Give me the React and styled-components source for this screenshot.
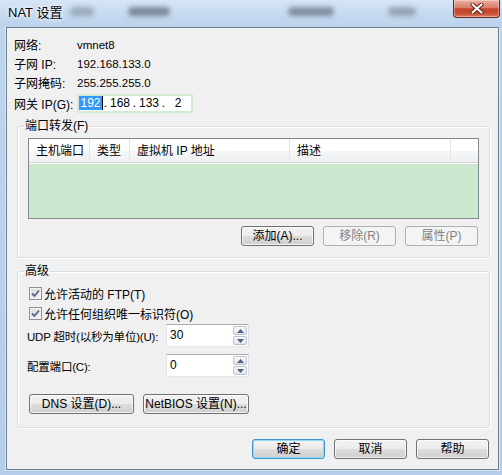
import React from 'react';
import styled, { createGlobalStyle } from 'styled-components';

const GlobalStyle = createGlobalStyle`
  html, body {
    margin: 0;
    padding: 0;
    background: #b9d1ea;
  }
  body {
    font-family: "Liberation Sans", "Noto Sans CJK SC", sans-serif;
    font-size: 12px;
    color: #000;
    overflow: hidden;
  }
`;

const Window = styled.div`
  width: 502px;
  height: 475px;
  display: flex;
  flex-direction: column;
  background: linear-gradient(to bottom, #c8dcf1 0px, #bdd4ec 40px, #b4cde8 100%);
`;

const TitleBar = styled.div`
  position: relative;
  height: 27px;
  flex-shrink: 0;
  display: flex;
  align-items: flex-start;
  background: linear-gradient(to bottom, #d6e6f6, #c3d8ef 60%, #bcd3ec);
`;

const Blur = styled.span`
  position: absolute;
  top: 7px;
  left: ${p => p.$left}px;
  width: ${p => p.$width}px;
  height: 9px;
  border-radius: 5px;
  background: rgba(70, 80, 95, ${p => p.$alpha});
  filter: blur(2.5px);
`;

const Title = styled.div`
  position: relative;
  z-index: 1;
  padding: 5px 0 0 8px;
  font-size: 13px;
  line-height: 15px;
  text-shadow: 0 0 5px #fff, 0 0 3px #fff;
`;

const CloseButton = styled.div`
  position: relative;
  z-index: 1;
  margin-left: auto;
  margin-right: 2px;
  width: 47px;
  height: 18px;
  box-sizing: border-box;
  border: 1px solid #6e2419;
  border-top: none;
  border-radius: 0 0 4px 4px;
  background: linear-gradient(to bottom, #eab0a2 0%, #d97d6a 45%, #c5432d 52%, #c94f33 80%, #dc8166 100%);
  box-shadow: inset 0 0 0 1px rgba(255, 255, 255, 0.35);
  display: flex;
  align-items: center;
  justify-content: center;
`;

const Client = styled.div`
  flex: 1;
  margin: 0 3px 5px 6px;
  border: 1px solid #6f7f92;
  background: #f0f0f0;
  display: flex;
  flex-direction: column;
  box-shadow: 0 0 0 1px rgba(255, 255, 255, 0.45);
`;

const InfoList = styled.div`
  display: flex;
  flex-direction: column;
  padding: 7px 0 0 7px;
`;

const InfoRow = styled.div`
  display: grid;
  grid-template-columns: 63px auto;
  align-items: center;
  height: 19px;
  margin-top: ${p => p.$mt || 0}px;
`;

const InfoValue = styled.span`
  font-size: 11.5px;
`;

const IpBox = styled.div`
  display: flex;
  align-items: center;
  width: 116px;
  height: 19px;
  box-sizing: border-box;
  border: 2px solid #d3ebd3;
  background: #fff;
`;

const Octet = styled.span`
  width: 24px;
  text-align: center;
  line-height: 15px;
`;

const Dot = styled.span`
  width: 5px;
  text-align: center;
  line-height: 15px;
`;

const Selected = styled.span`
  background: #3399ff;
  color: #fff;
  padding: 0 1px;
  border-right: 1px solid #000;
`;

const Group = styled.fieldset`
  margin: ${p => p.$mt}px 8px 0 10px;
  padding: 0;
  min-width: 0;
  border: 1px solid #d5dfe5;
  border-radius: 3px;
  box-shadow: inset 1px 1px 0 #fff, 1px 1px 0 #fff;
`;

const Legend = styled.legend`
  margin-left: 6px;
  padding: 0 1px;
  font-size: 12px;
  line-height: 14px;
`;

const GroupBody = styled.div`
  padding: ${p => p.$pad};
  display: flex;
  flex-direction: column;
`;

const Table = styled.div`
  height: 81px;
  box-sizing: border-box;
  border: 1px solid #828790;
  background: #cce8cf;
`;

const HeaderRow = styled.div`
  display: flex;
  height: 23px;
  border-bottom: 1px solid #d5d5d5;
  box-shadow: 0 1px 0 #fff;
  background: linear-gradient(to bottom, #ffffff 0%, #ffffff 50%, #f5f6f7 52%, #eff1f3 100%);
`;

const HeaderCell = styled.div`
  box-sizing: border-box;
  width: ${p => (p.$w ? `${p.$w}px` : 'auto')};
  flex: ${p => (p.$w ? 'none' : '1')};
  padding-left: 7px;
  line-height: 24px;
  border-right: ${p => (p.$last ? 'none' : '1px solid #e3e5e8')};
  white-space: nowrap;
`;

const ButtonRow = styled.div`
  display: flex;
  justify-content: ${p => (p.$start ? 'flex-start' : 'flex-end')};
  gap: 9px;
  margin: ${p => p.$margin};
`;

const Button = styled.button`
  box-sizing: border-box;
  width: ${p => p.$w || 73}px;
  height: 20px;
  padding: 0;
  font: inherit;
  font-size: 12px;
  line-height: 18px;
  color: #000;
  white-space: nowrap;
  border: 1px solid ${p => (p.$default ? '#3b93cf' : '#707070')};
  border-radius: 3px;
  background: linear-gradient(to bottom, #f3f3f3 0%, #ebebeb 48%, #dddddd 52%, #cfcfcf 100%);
  box-shadow: inset 0 0 0 1px ${p => (p.$default ? '#8fdcfa' : 'rgba(255, 255, 255, 0.75)')};

  &:disabled {
    border-color: #adb2b5;
    background: #f4f4f4;
    color: #838383;
    box-shadow: none;
  }
`;

const CheckRow = styled.label`
  display: flex;
  align-items: center;
  gap: 2px;
  height: 20px;
  margin-left: 2px;
`;

const CheckBox = styled.span`
  width: 13px;
  height: 13px;
  box-sizing: border-box;
  border: 1px solid #8f8f8f;
  background: linear-gradient(135deg, #d8d8d8, #f7f7f7);
  box-shadow: inset 0 0 0 1px #f4f4f4;
  display: flex;
  align-items: center;
  justify-content: center;
`;

const FieldRow = styled.div`
  display: grid;
  grid-template-columns: 139px 83px;
  align-items: center;
  height: 23px;
  margin-top: ${p => p.$mt}px;
`;

const FieldLabel = styled.span`
  white-space: nowrap;
  font-size: 11.5px;
  letter-spacing: -0.2px;
`;

const SpinBox = styled.div`
  height: 23px;
  box-sizing: border-box;
  border: 1px solid #abadb3;
  border-left-color: #e2e3ea;
  border-right-color: #dbdfe6;
  border-bottom-color: #e3e9ef;
  background: #fff;
  display: flex;
`;

const SpinText = styled.span`
  flex: 1;
  padding-left: 3px;
  line-height: 21px;
`;

const SpinButtons = styled.div`
  width: 14px;
  display: flex;
  flex-direction: column;
  gap: 1px;
  padding: 1px 1px 1px 0;
`;

const SpinButton = styled.span`
  flex: 1;
  border: 1px solid #bcc3cc;
  border-radius: 2px;
  background: linear-gradient(to bottom, #f7f8f9, #e1e5ea);
  display: flex;
  align-items: center;
  justify-content: center;
`;

const Footer = styled(ButtonRow)``;

function Check() {
  return (
    <CheckBox>
      <svg width="9" height="9" viewBox="0 0 9 9">
        <path d="M1 4.5 L3.5 7 L8 1.5" fill="none" stroke="#55688c" strokeWidth="1.8" />
      </svg>
    </CheckBox>
  );
}

function Spinner({ value }) {
  return (
    <SpinBox>
      <SpinText>{value}</SpinText>
      <SpinButtons>
        <SpinButton>
          <svg width="7" height="4" viewBox="0 0 7 4"><path d="M0 4 L3.5 0 L7 4 Z" fill="#4d6185" /></svg>
        </SpinButton>
        <SpinButton>
          <svg width="7" height="4" viewBox="0 0 7 4"><path d="M0 0 L7 0 L3.5 4 Z" fill="#4d6185" /></svg>
        </SpinButton>
      </SpinButtons>
    </SpinBox>
  );
}

export default function App() {
  return (
    <Window>
      <GlobalStyle />
      <TitleBar>
        <Blur $left={70} $width={24} $alpha={0.35} />
        <Blur $left={128} $width={42} $alpha={0.6} />
        <Blur $left={288} $width={46} $alpha={0.55} />
        <Blur $left={388} $width={28} $alpha={0.4} />
        <Title>NAT 设置</Title>
        <CloseButton>
          <svg width="14" height="11" viewBox="0 0 14 11">
            <path d="M2.5 1.5 L11.5 9.5 M11.5 1.5 L2.5 9.5" stroke="#5a1e14" strokeWidth="4" strokeLinecap="round" />
            <path d="M2.5 1.5 L11.5 9.5 M11.5 1.5 L2.5 9.5" stroke="#fff" strokeWidth="2.2" strokeLinecap="round" />
          </svg>
        </CloseButton>
      </TitleBar>
      <Client>
        <InfoList>
          <InfoRow><span>网络:</span><InfoValue>vmnet8</InfoValue></InfoRow>
          <InfoRow><span>子网 IP:</span><InfoValue>192.168.133.0</InfoValue></InfoRow>
          <InfoRow><span>子网掩码:</span><InfoValue>255.255.255.0</InfoValue></InfoRow>
          <InfoRow $mt={2}>
            <span>网关 IP(G):</span>
            <IpBox>
              <Octet><Selected>192</Selected></Octet>
              <Dot>.</Dot>
              <Octet>168</Octet>
              <Dot>.</Dot>
              <Octet>133</Octet>
              <Dot>.</Dot>
              <Octet>2</Octet>
            </IpBox>
          </InfoRow>
        </InfoList>

        <Group $mt={6}>
          <Legend>端口转发(F)</Legend>
          <GroupBody $pad="5px 10px 11px 10px">
            <Table>
              <HeaderRow>
                <HeaderCell $w={61}>主机端口</HeaderCell>
                <HeaderCell $w={40}>类型</HeaderCell>
                <HeaderCell $w={160}>虚拟机 IP 地址</HeaderCell>
                <HeaderCell $w={161}>描述</HeaderCell>
                <HeaderCell $last />
              </HeaderRow>
            </Table>
            <ButtonRow $margin="7px 1px 0 0">
              <Button>添加(A)...</Button>
              <Button disabled>移除(R)</Button>
              <Button disabled>属性(P)</Button>
            </ButtonRow>
          </GroupBody>
        </Group>

        <Group $mt={6}>
          <Legend>高级</Legend>
          <GroupBody $pad="5px 0 13px 9px">
            <CheckRow><Check />允许活动的 FTP(T)</CheckRow>
            <CheckRow><Check />允许任何组织唯一标识符(O)</CheckRow>
            <FieldRow $mt={1}>
              <FieldLabel>UDP 超时(以秒为单位)(U):</FieldLabel>
              <Spinner value="30" />
            </FieldRow>
            <FieldRow $mt={7}>
              <FieldLabel>配置端口(C):</FieldLabel>
              <Spinner value="0" />
            </FieldRow>
            <ButtonRow $start $margin="17px 0 0 2px">
              <Button $w={105}>DNS 设置(D)...</Button>
              <Button $w={106}>NetBIOS 设置(N)...</Button>
            </ButtonRow>
          </GroupBody>
        </Group>

        <Footer $margin="11px 9px 0 0">
          <Button $default>确定</Button>
          <Button>取消</Button>
          <Button>帮助</Button>
        </Footer>
      </Client>
    </Window>
  );
}
